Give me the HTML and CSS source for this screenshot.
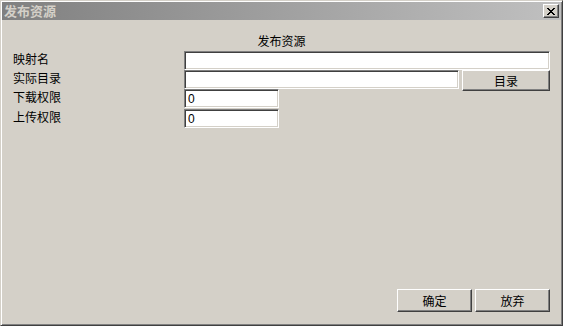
FILE: index.html
```html
<!DOCTYPE html>
<html lang="zh-CN">
<head>
    <meta charset="UTF-8">
    <title>发布资源</title>
    <link rel="stylesheet" href="styles.css">
</head>
<body>
    <div class="window">
        <div class="title-bar">
            <div class="title-text">发布资源</div>
            <div class="close-button">
                <svg width="8" height="7" viewBox="0 0 8 7">
                    <path d="M0 0h2v1h-2zM6 0h2v1h-2zM1 1h2v1h-2zM5 1h2v1h-2zM2 2h4v1h-4zM3 3h2v1h-2zM2 4h4v1h-4zM1 5h2v1h-2zM5 5h2v1h-2zM0 6h2v1h-2zM6 6h2v1h-2z" fill="#000"/>
                </svg>
            </div>
        </div>

        <div class="client">
            <div class="form-title">发布资源</div>

            <div class="form-grid">
                <div class="label">映射名</div>
                <div class="field"><input class="edit edit-full" type="text" value=""></div>

                <div class="label">实际目录</div>
                <div class="field">
                    <input class="edit edit-dir" type="text" value="">
                    <div class="button dir-button">目录</div>
                </div>

                <div class="label">下载权限</div>
                <div class="field"><input class="edit edit-small" type="text" value="0"></div>

                <div class="label">上传权限</div>
                <div class="field"><input class="edit edit-small" type="text" value="0"></div>
            </div>

            <div class="footer">
                <div class="button footer-button">确定</div>
                <div class="button footer-button">放弃</div>
            </div>
        </div>
    </div>
</body>
</html>
```

FILE: styles.css
```css
* {
    margin: 0;
    padding: 0;
    box-sizing: border-box;
}

body {
    width: 563px;
    height: 326px;
    overflow: hidden;
    background-color: #d4d0c8;
    font-family: "Liberation Sans", "Noto Sans CJK SC", sans-serif;
    font-size: 12px;
    color: #000;
}

.window {
    width: 563px;
    height: 326px;
    display: flex;
    flex-direction: column;
    padding: 1px;
    background-color: #d4d0c8;
    border-top: 1px solid #d4d0c8;
    border-left: 1px solid #d4d0c8;
    border-right: 1px solid #404040;
    border-bottom: 1px solid #404040;
    box-shadow: inset 1px 1px 0 #fff, inset -1px -1px 0 #808080;
}

/* title bar */
.title-bar {
    height: 18px;
    display: flex;
    align-items: center;
    justify-content: space-between;
    padding: 0 2px 0 2px;
    background: linear-gradient(to right, #808080, #c0c0c0);
}

.title-text {
    font-family: "Noto Sans CJK SC", sans-serif;
    font-weight: bold;
    font-size: 13px;
    line-height: 18px;
    color: #d4d0c8;
}

.close-button {
    width: 16px;
    height: 14px;
    display: flex;
    justify-content: center;
    align-items: center;
    background-color: #d4d0c8;
    border-top: 1px solid #fff;
    border-left: 1px solid #fff;
    border-right: 1px solid #404040;
    border-bottom: 1px solid #404040;
    box-shadow: inset -1px -1px 0 #808080;
}

/* client area */
.client {
    flex: 1;
    display: flex;
    flex-direction: column;
    padding: 0 11px 12px 11px;
}

.form-title {
    font-family: "Noto Sans CJK SC", sans-serif;
    text-align: center;
    line-height: 17px;
    margin-top: 12px;
    margin-bottom: 2px;
}

.form-grid {
    display: grid;
    grid-template-columns: 171px 1fr;
    grid-template-rows: 19px 19px 20px 19px;
}

.label {
    font-family: "Noto Sans CJK SC", sans-serif;
    line-height: 15px;
}

.field {
    display: flex;
    align-items: flex-start;
    gap: 3px;
}

.edit {
    height: 19px;
    border-top: 1px solid #808080;
    border-left: 1px solid #808080;
    border-right: 1px solid #fff;
    border-bottom: 1px solid #fff;
    box-shadow: inset 1px 1px 0 #404040, inset -1px -1px 0 #d4d0c8;
    background-color: #fff;
    padding: 0 3px;
    font-family: "Liberation Sans", sans-serif;
    font-size: 12px;
    color: #000;
    outline: none;
}

.edit-full {
    width: 366px;
}

.edit-dir {
    width: 275px;
}

.edit-small {
    width: 95px;
}

.button {
    display: flex;
    justify-content: center;
    align-items: center;
    background-color: #d4d0c8;
    border-top: 1px solid #fff;
    border-left: 1px solid #fff;
    border-right: 1px solid #404040;
    border-bottom: 1px solid #404040;
    box-shadow: inset -1px -1px 0 #808080;
    font-family: "Noto Sans CJK SC", sans-serif;
    font-size: 12px;
}

.dir-button {
    width: 88px;
    height: 21px;
}

.footer {
    margin-top: auto;
    display: flex;
    justify-content: flex-end;
    gap: 3px;
}

.footer-button {
    width: 75px;
    height: 23px;
}
```
